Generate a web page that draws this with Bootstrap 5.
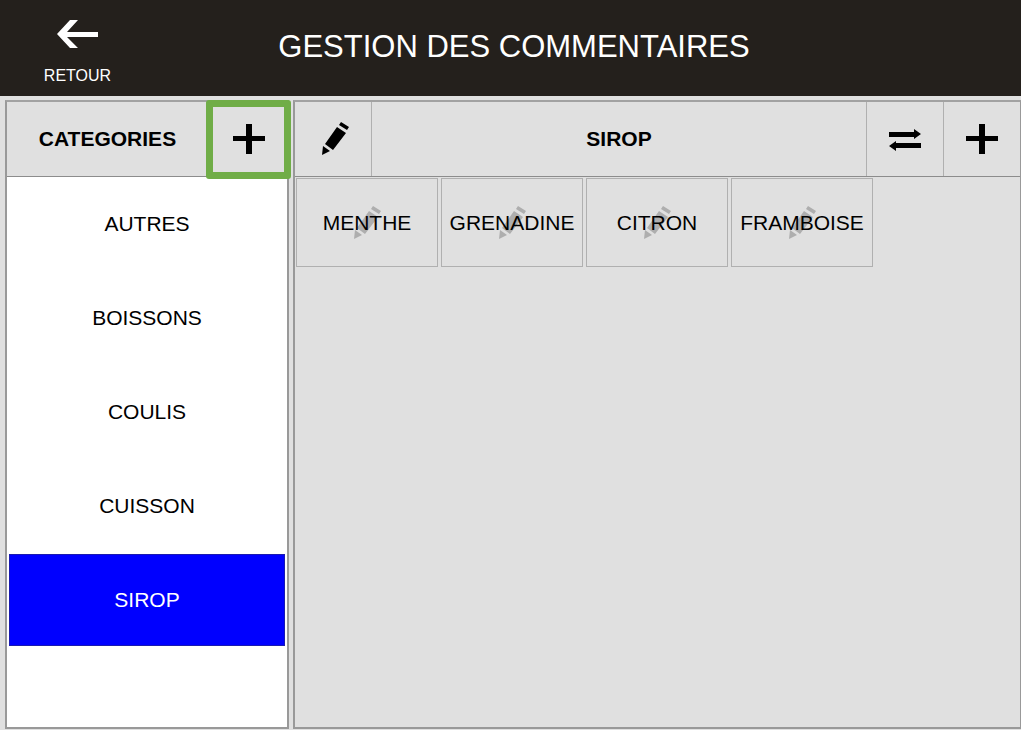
<!DOCTYPE html>
<html lang="fr">
<head>
<meta charset="utf-8">
<meta name="viewport" content="width=device-width, initial-scale=1">
<title>Gestion des commentaires</title>
<link href="https://cdn.jsdelivr.net/npm/bootstrap@5.3.0/dist/css/bootstrap.min.css" rel="stylesheet">
<style>
body { background: #e0e0e0; color: #000; font-family: "Liberation Sans", Arial, sans-serif; font-size: 21px; line-height: 24px; }
button { color: inherit; }
.topbar { background: #24201c; min-height: 96px; }
.side-slot { width: 155px; padding-top: 20px; }
.back-link { font-size: 16px; line-height: 20px; gap: 18px; }
.page-title { font-size: 31px; line-height: 36px; padding: 29px 148px 0 0; }
.workspace { padding: 4px 0 1px 5px; gap: 4px; }
.panel { border: 2px solid #999; border-top-color: #a2a2a2; }
.panel-side { width: 284px; }
.panel-main { border-right-width: 1px; }
.panel-head { min-height: 75px; border-bottom: 1px solid #8c8c8c; }
.panel-title { font-size: 21px; line-height: 24px; }
.tool { width: 77px; background: transparent; border: 0 solid #b0b0b0; padding: 0; }
.tool-start { border-right-width: 1px; padding-left: 4px; }
.tool-end { border-left-width: 1px; }
.tool-add { width: 79px; padding-left: 2px; }
.highlight { inset: -2px -4px -3px -2px; border: 7px solid #70ad47; border-radius: 3px; pointer-events: none; }
.cat-list { padding: 1px 2px; gap: 2px; }
.cat { height: 92px; border: 0; background: transparent; }
.cat.active { background: #00f; color: #fff; border: 1px solid #1a1ab0; }
.tiles { padding: 1px; gap: 3px; }
.tile { width: 142px; height: 89px; padding: 0; background: transparent; border: 1px solid #b0b0b0; }
.tile svg { opacity: .22; inset: 0; margin: auto; }
</style>
</head>
<body class="d-flex flex-column min-vh-100">
<svg class="d-none" aria-hidden="true">
  <symbol id="pencil" viewBox="0 0 28 34">
    <path d="M18 3 20 0 28 5 26 8ZM16 5 25 11 12 28 4 22ZM2 24 9 29 1 33Z"/>
  </symbol>
  <symbol id="plus" viewBox="0 0 32 30">
    <path d="M13 0h6v12h13v5H19v13h-6V17H0v-5h13Z"/>
  </symbol>
</svg>

<header class="topbar d-flex align-items-start text-white">
  <div class="side-slot flex-shrink-0 text-center">
    <a href="#" class="back-link d-flex flex-column align-items-center text-white text-decoration-none">
      <svg width="42" height="28" viewBox="0 0 42 28" fill="#fff" aria-hidden="true"><path d="M13 0h8L10 12h31v5H10l11 11h-8L0 14Z"/></svg>
      RETOUR
    </a>
  </div>
  <h1 class="page-title flex-grow-1 text-center fw-normal mb-0">GESTION DES COMMENTAIRES</h1>
</header>

<main class="workspace d-flex flex-grow-1">
  <section class="panel panel-side d-flex flex-column flex-shrink-0" aria-labelledby="cat-title">
    <div class="panel-head d-flex">
      <h2 id="cat-title" class="panel-title flex-grow-1 align-self-center text-center fw-bold mb-0">CATEGORIES</h2>
      <div class="position-relative d-flex">
        <button type="button" class="tool tool-add tool-end" aria-label="Ajouter une catégorie"><svg width="32" height="30"><use href="#plus"/></svg></button>
        <div class="highlight position-absolute"></div>
      </div>
    </div>
    <nav class="cat-list d-flex flex-column flex-grow-1 bg-white" aria-label="Catégories">
      <button type="button" class="cat">AUTRES</button>
      <button type="button" class="cat">BOISSONS</button>
      <button type="button" class="cat">COULIS</button>
      <button type="button" class="cat">CUISSON</button>
      <button type="button" class="cat active" aria-current="true">SIROP</button>
    </nav>
  </section>

  <section class="panel panel-main flex-grow-1" aria-labelledby="com-title">
    <div class="panel-head d-flex">
      <button type="button" class="tool tool-start" aria-label="Modifier la catégorie"><svg width="28" height="34"><use href="#pencil"/></svg></button>
      <h2 id="com-title" class="panel-title flex-grow-1 align-self-center text-center fw-bold mb-0">SIROP</h2>
      <button type="button" class="tool tool-end" aria-label="Réorganiser"><svg width="32" height="22" viewBox="0 0 32 22"><path d="M0 3h25V0l7 5-7 5V8H0ZM32 19H7v3l-7-5 7-5v2h25Z"/></svg></button>
      <button type="button" class="tool tool-end" aria-label="Ajouter un commentaire"><svg width="32" height="30"><use href="#plus"/></svg></button>
    </div>
    <div class="tiles d-flex flex-wrap">
      <button type="button" class="tile position-relative"><svg class="position-absolute" width="28" height="34" aria-hidden="true"><use href="#pencil"/></svg><span class="position-relative">MENTHE</span></button>
      <button type="button" class="tile position-relative"><svg class="position-absolute" width="28" height="34" aria-hidden="true"><use href="#pencil"/></svg><span class="position-relative">GRENADINE</span></button>
      <button type="button" class="tile position-relative"><svg class="position-absolute" width="28" height="34" aria-hidden="true"><use href="#pencil"/></svg><span class="position-relative">CITRON</span></button>
      <button type="button" class="tile position-relative"><svg class="position-absolute" width="28" height="34" aria-hidden="true"><use href="#pencil"/></svg><span class="position-relative">FRAMBOISE</span></button>
    </div>
  </section>
</main>
<script src="https://cdn.jsdelivr.net/npm/bootstrap@5.3.0/dist/js/bootstrap.bundle.min.js"></script>
</body>
</html>
